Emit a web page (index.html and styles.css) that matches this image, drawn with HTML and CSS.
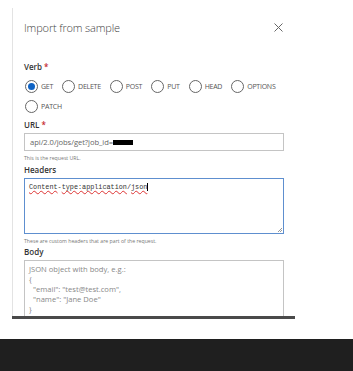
FILE: index.html
```html
<!DOCTYPE html>
<html lang="en">
<head>
  <meta charset="UTF-8" />
  <title>Import from sample</title>
  <link rel="stylesheet" href="styles.css">
</head>
<body>
  <div class="page">
    <div class="panel">
      <div class="tick"></div>
      <div class="content">
        <div class="header">
          <h1 class="title">Import from sample</h1>
          <svg class="close" width="9" height="9" viewBox="0 0 9 9">
            <path d="M0.5 0.5 L8.5 8.5 M8.5 0.5 L0.5 8.5" stroke="#666" stroke-width="1" fill="none" />
          </svg>
        </div>

        <div class="label">Verb <span class="req">*</span></div>
        <div class="radios">
          <label class="radio checked"><span class="dot"></span>GET</label>
          <label class="radio"><span class="dot"></span>DELETE</label>
          <label class="radio"><span class="dot"></span>POST</label>
          <label class="radio"><span class="dot"></span>PUT</label>
          <label class="radio"><span class="dot"></span>HEAD</label>
          <label class="radio"><span class="dot"></span>OPTIONS</label>
          <label class="radio"><span class="dot"></span>PATCH</label>
        </div>

        <div class="label url-label">URL <span class="req">*</span></div>
        <div class="input">api/2.0/jobs/get?job_id=<span class="redact"></span></div>
        <div class="hint">This is the request URL.</div>

        <div class="label head-label">Headers</div>
        <div class="textarea focus">
          <span class="code"><span class="typo">Content</span>-<span class="typo">type:application</span>/<span class="typo">json</span></span><span class="caret"></span>
          <span class="grip"></span>
        </div>
        <div class="hint">These are custom headers that are part of the request.</div>

        <div class="label body-label">Body</div>
        <div class="textarea body-box">
          <div>JSON object with body, e.g.:</div>
          <div>{</div>
          <div>&nbsp;&nbsp;"email": "test@test.com",</div>
          <div>&nbsp;&nbsp;"name": "Jane Doe"</div>
          <div>}</div>
        </div>
      </div>
    </div>
    <div class="hscroll"></div>
  </div>
  <div class="footer"></div>
</body>
</html>
```

FILE: styles.css
```css
* {
  margin: 0;
  padding: 0;
  box-sizing: border-box;
}

body {
  background: #fff;
  font-family: "Open Sans", "Liberation Sans", sans-serif;
  color: #333;
  width: 353px;
  height: 371px;
  overflow: hidden;
}

.page {
  padding-top: 8px;
  height: 339px;
}

.panel {
  position: relative;
  margin-left: 12px;
  width: 283px;
  height: 308px;
  border-left: 1px solid #e3e3e3;
  overflow: hidden;
}

.tick {
  position: absolute;
  left: -1px;
  top: 36px;
  width: 1px;
  height: 4px;
  background: #777;
}

.content {
  padding-left: 11px;
  width: 272px;
}

/* header */
.header {
  display: flex;
  justify-content: space-between;
  align-items: center;
  height: 38px;
  padding-right: 2px;
}

.title {
  font-size: 11px;
  font-weight: 300;
  color: #444;
  letter-spacing: -0.15px;
}

.close {
  display: block;
}

.label {
  font-size: 8px;
  font-weight: 600;
  color: #333;
  margin-top: 15px;
  line-height: 12px;
}

.req {
  color: #c4262e;
}

/* radios */
.radios {
  display: flex;
  flex-wrap: wrap;
  margin-top: 7px;
  padding-left: 1px;
  row-gap: 7px;
  column-gap: 9px;
  width: 256px;
}

.radio {
  display: flex;
  align-items: center;
  gap: 3px;
  height: 13px;
  font-size: 7px;
  letter-spacing: -0.25px;
  color: #555;
}

.dot {
  width: 13px;
  height: 13px;
  border: 1px solid #666;
  border-radius: 50%;
  display: flex;
  align-items: center;
  justify-content: center;
}

.radio.checked .dot::after {
  content: "";
  width: 7px;
  height: 7px;
  border-radius: 50%;
  background: #0f63c4;
}

.url-label {
  margin-top: 6px;
}

.input {
  margin-top: 2px;
  width: 260px;
  height: 18px;
  border: 1px solid #c4c4c4;
  font-size: 7.6px;
  letter-spacing: -0.05px;
  color: #666;
  padding: 3px 5px;
  line-height: 11px;
  display: flex;
  align-items: center;
}

.redact {
  display: inline-block;
  width: 20px;
  height: 5px;
  background: #000;
}

.hint {
  font-size: 5.2px;
  color: #777;
  margin-top: 4px;
  line-height: 6px;
}

.head-label {
  margin-top: 3px;
}

.textarea {
  position: relative;
  margin-top: 2px;
  width: 260px;
  border: 1px solid #c4c4c4;
  padding: 3px 4px;
}

.textarea.focus {
  height: 56px;
  border: 1.5px solid #5e8fcf;
  margin-bottom: 3px;
  font-size: 7px;
  line-height: 10px;
}

.code {
  font-family: "Liberation Mono", monospace;
  font-size: 6.8px;
  color: #333;
}

.typo {
  text-decoration: underline wavy #d33;
  text-decoration-thickness: 0.6px;
}

.caret {
  display: inline-block;
  width: 1px;
  height: 8px;
  background: #000;
  vertical-align: middle;
}

.grip {
  position: absolute;
  right: 1px;
  bottom: 1px;
  width: 4px;
  height: 4px;
  background: linear-gradient(135deg, transparent 45%, #999 45%, #999 55%, transparent 55%, transparent 70%, #999 70%, #999 80%, transparent 80%);
}

.body-label {
  margin-top: 2px;
}

.body-box {
  height: 60px;
  font-size: 7.6px;
  line-height: 10px;
  color: #888;
  padding: 3px 4px;
}

.hscroll {
  margin-left: 12px;
  width: 283px;
  height: 3px;
  background: #4a4a4a;
}

.footer {
  height: 32px;
  background: #1f1f1f;
}
```
